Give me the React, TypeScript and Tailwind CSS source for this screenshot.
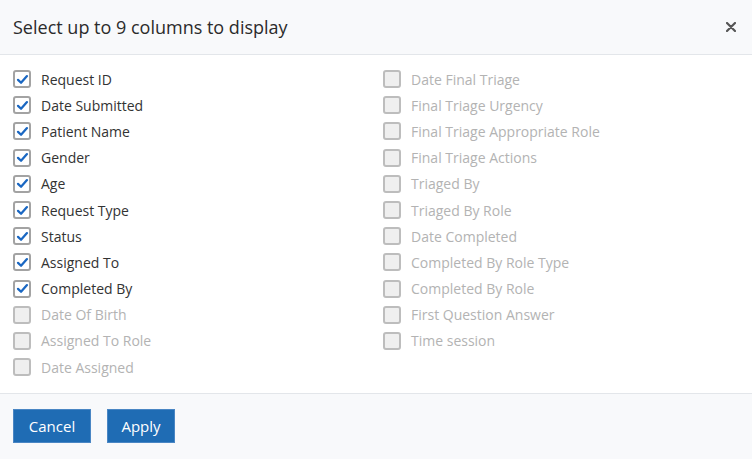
import React, { useState } from 'react';

const LEFT = [
  'Request ID',
  'Date Submitted',
  'Patient Name',
  'Gender',
  'Age',
  'Request Type',
  'Status',
  'Assigned To',
  'Completed By',
  'Date Of Birth',
  'Assigned To Role',
  'Date Assigned',
];

const RIGHT = [
  'Date Final Triage',
  'Final Triage Urgency',
  'Final Triage Appropriate Role',
  'Final Triage Actions',
  'Triaged By',
  'Triaged By Role',
  'Date Completed',
  'Completed By Role Type',
  'Completed By Role',
  'First Question Answer',
  'Time session',
];

const INITIAL = LEFT.slice(0, 9);

const CheckRow: React.FC<{ label: string; checked: boolean; onToggle: () => void }> = ({ label, checked, onToggle }) => (
  <label className="flex h-[26.2px] cursor-pointer items-center gap-[10px]" onClick={onToggle}>
    <span
      className={`flex h-[18px] w-[18px] shrink-0 items-center justify-center rounded-[3px] border-2 ${
        checked ? 'border-[#a3a3a3] bg-white' : 'border-[#bdbdbd] bg-[#efefef]'
      }`}
    >
      {checked && (
        <svg viewBox="0 0 16 16" className="h-[13px] w-[13px]">
          <path d="M2.5 8.5 L6.2 12 L13.5 3.8" fill="none" stroke="#1a67c2" strokeWidth="2.8" strokeLinecap="round" strokeLinejoin="round" />
        </svg>
      )}
    </span>
    <span className={`text-[14px] ${checked ? 'text-[#333333]' : 'text-[#b3b3b3]'}`}>{label}</span>
  </label>
);

export default function App() {
  const [selected, setSelected] = useState<string[]>(INITIAL);

  const toggle = (name: string) => {
    setSelected((prev) => {
      if (prev.includes(name)) return prev.filter((n) => n !== name);
      if (prev.length >= 9) return prev;
      return [...prev, name];
    });
  };

  return (
    <div className="h-[459px] w-[752px] bg-white" style={{ fontFamily: '"Open Sans", "Liberation Sans", sans-serif' }}>
      {/* Header */}
      <div className="flex h-[55px] items-center justify-between border-b border-[#e3e6ea] bg-[#f8f9fb] pl-[13px] pr-[16px]">
        <h2 className="text-[18px] text-[#2b2b2b]">Select up to 9 columns to display</h2>
        <button className="text-[#555]">
          <svg viewBox="0 0 10 10" className="h-[10px] w-[10px]">
            <path d="M1 1 L9 9 M9 1 L1 9" stroke="currentColor" strokeWidth="2.2" strokeLinecap="round" />
          </svg>
        </button>
      </div>

      {/* Body */}
      <div className="grid h-[339px] grid-cols-[370px_1fr] border-b border-[#e3e6ea] px-[13px] pt-[11px]">
        <div className="flex flex-col">
          {LEFT.map((name) => (
            <CheckRow key={name} label={name} checked={selected.includes(name)} onToggle={() => toggle(name)} />
          ))}
        </div>
        <div className="flex flex-col">
          {RIGHT.map((name) => (
            <CheckRow key={name} label={name} checked={selected.includes(name)} onToggle={() => toggle(name)} />
          ))}
        </div>
      </div>

      {/* Footer */}
      <div className="flex h-[65px] items-start gap-[16px] bg-[#f8f9fb] px-[13px] pt-[15px]">
        <button className="h-[34px] w-[78px] border border-[#4a86c4] bg-[#1f6cb4] text-[15px] font-medium text-white">Cancel</button>
        <button className="h-[34px] w-[68px] border border-[#4a86c4] bg-[#1f6cb4] text-[15px] font-medium text-white">Apply</button>
      </div>
    </div>
  );
}
